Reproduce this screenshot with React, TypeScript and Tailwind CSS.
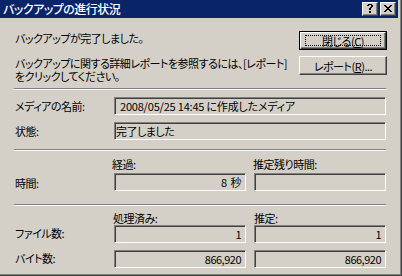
import React from 'react';

// pixel glyphs for the caption buttons (Marlett-like)
const CLOSE_GLYPH = [
  'XX....XX',
  '.XX..XX.',
  '..XXXX..',
  '...XX...',
  '..XXXX..',
  '.XX..XX.',
  'XX....XX',
];

const HELP_GLYPH = [
  '.XXXX.',
  'XX..XX',
  '....XX',
  '...XX.',
  '..XX..',
  '..XX..',
  '......',
  '..XX..',
  '..XX..',
];

const REPORT_TEXT = 'バックアップに関する詳細レポートを参照するには、[レポート]\nをクリックしてください。';

const Glyph: React.FC<{ rows: string[]; x: number; y: number }> = ({ rows, x, y }) => (
  <svg width={14} height={12} className="block" shapeRendering="crispEdges">
    {rows.flatMap((row, j) =>
      row.split('').map((c, i) =>
        c === 'X' ? <rect key={`${i}-${j}`} x={x + i} y={y + j} width={1} height={1} fill="#000" /> : null
      )
    )}
  </svg>
);

const CaptionButton: React.FC<{ children: React.ReactNode }> = ({ children }) => (
  <div className="box-border h-[14px] w-[16px] border border-t-white border-l-white border-r-[#404040] border-b-[#404040] bg-[#d4d0c8] shadow-[inset_-1px_-1px_0_#808080]">
    {children}
  </div>
);

const Field: React.FC<{ children?: React.ReactNode; className?: string }> = ({ children, className = '' }) => (
  <div
    className={`box-border flex h-[18px] items-center whitespace-nowrap border border-t-[#808080] border-l-[#808080] border-r-white border-b-white leading-[14px] shadow-[inset_1px_1px_0_#404040] ${className}`}
  >
    {children}
  </div>
);

const Separator: React.FC<{ className?: string }> = ({ className = '' }) => (
  <div className={`-ml-[1px] box-border h-[2px] border-t border-b border-t-[#808080] border-b-white ${className}`} />
);

const App: React.FC = () => {
  return (
    <div className="relative box-border h-[276px] w-[402px] overflow-hidden bg-[#d4d0c8] pr-[4px] font-['Noto_Sans_CJK_JP',sans-serif] text-[11px] tracking-[-0.5px] text-black shadow-[inset_-1px_-1px_0_#404040,inset_-2px_-2px_0_#808080] [font-feature-settings:'palt']">
      {/* Title bar */}
      <div className="flex h-[18px] items-center justify-between bg-[#0a246a] pl-[3px] pr-[2px]">
        <span className="text-[12px] font-medium leading-[14px] text-white">バックアップの進行状況</span>
        <div className="flex gap-[2px]">
          <CaptionButton>
            <Glyph rows={HELP_GLYPH} x={4} y={1} />
          </CaptionButton>
          <CaptionButton>
            <Glyph rows={CLOSE_GLYPH} x={3} y={2} />
          </CaptionButton>
        </div>
      </div>

      <div className="flex flex-col pl-[15px] pr-[12px]">
        {/* status + close */}
        <div className="mt-[13px] flex items-start justify-between">
          <p className="mt-[1px] whitespace-nowrap leading-[13px]">バックアップが完了しました。</p>
          <button className="-mr-[1px] box-border h-[19px] w-[88px] shrink-0 border border-black bg-[#d4d0c8] p-0">
            <div className="box-border flex h-full w-full items-center justify-center border border-t-white border-l-white border-r-[#404040] border-b-[#404040] shadow-[inset_-1px_-1px_0_#808080]">
              <div className="box-border flex h-[11px] w-[76px] items-center justify-center whitespace-nowrap border border-dotted border-black leading-[12px]">
                閉じる(<span className="underline">C</span>)
              </div>
            </div>
          </button>
        </div>

        {/* report */}
        <div className="mt-[6px] flex items-start justify-between">
          <p className="mt-[1px] whitespace-pre-line leading-[13px]">{REPORT_TEXT}</p>
          <button className="-mr-[1px] box-border flex h-[19px] w-[88px] shrink-0 items-center justify-center whitespace-nowrap border border-t-white border-l-white border-r-[#404040] border-b-[#404040] bg-[#d4d0c8] p-0 leading-[12px] shadow-[inset_-1px_-1px_0_#808080]">
            レポート(<span className="underline">R</span>)...
          </button>
        </div>

        <Separator className="mt-[5px]" />

        {/* media */}
        <div className="mt-[7px] grid grid-cols-[91px_132px_132px] items-center gap-x-[8px]">
          <span>メディアの名前:</span>
          <Field className="col-span-2 pl-[5px] tracking-[-0.2px]">2008/05/25 14:45 に作成したメディア</Field>
        </div>
        <div className="mt-[7px] grid grid-cols-[91px_132px_132px] items-center gap-x-[8px]">
          <span>状態:</span>
          <Field className="col-span-2 pl-[1px]">完了しました</Field>
        </div>

        <Separator className="mt-[9px]" />

        {/* time */}
        <div className="mt-[5px] grid h-[14px] grid-cols-[91px_132px_132px] items-center gap-x-[8px]">
          <span />
          <span className="-ml-[2px]">経過:</span>
          <span className="-ml-[1px]">推定残り時間:</span>
        </div>
        <div className="mt-[2px] grid grid-cols-[91px_132px_132px] items-center gap-x-[8px]">
          <span className="mt-[3px]">時間:</span>
          <Field className="justify-end pr-[4px]">8&nbsp;&nbsp;秒</Field>
          <Field />
        </div>

        <Separator className="mt-[12px]" />

        {/* counts */}
        <div className="mt-[4px] grid h-[14px] grid-cols-[91px_132px_132px] items-center gap-x-[8px]">
          <span />
          <span className="-ml-[1px]">処理済み:</span>
          <span>推定:</span>
        </div>
        <div className="mt-[1px] grid grid-cols-[91px_132px_132px] items-center gap-x-[8px]">
          <span>ファイル数:</span>
          <Field className="justify-end pr-[4px]">1</Field>
          <Field className="justify-end pr-[4px]">1</Field>
        </div>
        <div className="mt-[7px] grid grid-cols-[91px_132px_132px] items-center gap-x-[8px]">
          <span>バイト数:</span>
          <Field className="justify-end pr-[4px]">866,920</Field>
          <Field className="justify-end pr-[4px]">866,920</Field>
        </div>
      </div>
    </div>
  );
};

export default App;
